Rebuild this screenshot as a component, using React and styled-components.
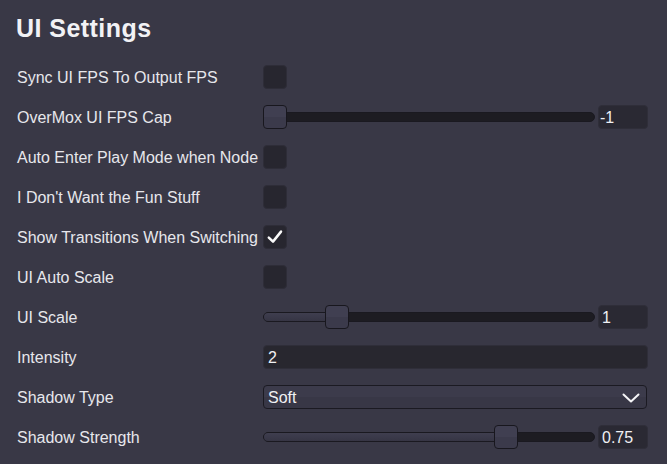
import React from 'react'
import styled, { createGlobalStyle } from 'styled-components'

const GlobalStyle = createGlobalStyle`
  html, body {
    margin: 0;
    padding: 0;
    background: #393846;
  }
  body {
    font-family: "Liberation Sans", Arial, sans-serif;
    color: #e7e7ec;
  }
`

const Page = styled.div`
  width: 667px;
  height: 464px;
  background: #393846;
  overflow: hidden;
`

const Title = styled.h1`
  margin: 0;
  height: 57px;
  padding: 13px 0 0 16px;
  box-sizing: border-box;
  font-size: 25px;
  line-height: 30px;
  font-weight: 700;
  letter-spacing: 0.45px;
  color: #f2f2f5;
`

const Grid = styled.div`
  display: grid;
  grid-template-columns: 246px 385px;
  grid-auto-rows: 40px;
  padding-left: 17px;
  align-items: center;
`

const Label = styled.div`
  font-size: 16px;
  padding-top: 2px;
  white-space: nowrap;
`

const Box = styled.div`
  width: 24px;
  height: 24px;
  box-sizing: border-box;
  border-radius: 4px;
  background: #27262f;
  border: 1px solid #2e2d38;
  display: flex;
  align-items: center;
  justify-content: center;
`

const SliderRow = styled.div`
  display: flex;
  align-items: center;
  gap: 3px;
`

const TrackArea = styled.div`
  position: relative;
  width: 332px;
  height: 24px;
  display: flex;
  align-items: center;
`

const Track = styled.div`
  width: 100%;
  height: 10px;
  box-sizing: border-box;
  border-radius: 5px;
  background: #1d1c22;
  border: 1px solid #1a1920;
  overflow: hidden;
  position: relative;
`

const Fill = styled.div`
  height: 100%;
  background: linear-gradient(#3f3e4f, #363544);
`

const Thumb = styled.div`
  position: absolute;
  top: 0;
  width: 24px;
  height: 24px;
  box-sizing: border-box;
  border-radius: 4px;
  border: 1px solid #18171e;
  background: linear-gradient(#403f51 0 50%, #3b3a4b 50% 100%);
`

const ValueBox = styled.div`
  width: 50px;
  height: 24px;
  box-sizing: border-box;
  border-radius: 4px;
  background: #2a2933;
  border: 1px solid #2f2e39;
  font-size: 16px;
  line-height: 23px;
  padding-left: ${p => p.$pad || 3}px;
  color: #f0f0f3;
`

const TextField = styled(ValueBox)`
  width: 385px;
  background: #28272f;
  padding-left: 4px;
`

const Select = styled.div`
  width: 384px;
  height: 24px;
  box-sizing: border-box;
  border-radius: 4px;
  border: 1px solid #1b1a22;
  background: linear-gradient(#3c3b4b 0 50%, #383746 50% 100%);
  display: flex;
  align-items: center;
  justify-content: space-between;
  padding: 1px 6px 0 4px;
  font-size: 16px;
  color: #f0f0f3;
`

function Check({ checked }) {
  return (
    <Box>
      {checked && (
        <svg width="20" height="20" viewBox="0 0 20 20">
          <path d="M3.8 10.6 L8 14.6 L16 4.6" fill="none" stroke="#fafafa" strokeWidth="2.5" strokeLinecap="round" strokeLinejoin="round" />
        </svg>
      )}
    </Box>
  )
}

function Slider({ frac, value, pad }) {
  const left = Math.round(frac * (332 - 24))
  return (
    <SliderRow>
      <TrackArea>
        <Track>
          <Fill style={{ width: left + 12 }} />
        </Track>
        <Thumb style={{ left }} />
      </TrackArea>
      <ValueBox $pad={pad}>{value}</ValueBox>
    </SliderRow>
  )
}

const rows = [
  { label: 'Sync UI FPS To Output FPS', kind: 'check' },
  { label: 'OverMox UI FPS Cap', kind: 'slider', frac: 0, value: '-1', pad: 1 },
  { label: 'Auto Enter Play Mode when Node', kind: 'check' },
  { label: "I Don't Want the Fun Stuff", kind: 'check' },
  { label: 'Show Transitions When Switching', kind: 'check', checked: true },
  { label: 'UI Auto Scale', kind: 'check' },
  { label: 'UI Scale', kind: 'slider', frac: 0.2, value: '1', pad: 3 },
  { label: 'Intensity', kind: 'text', value: '2' },
  { label: 'Shadow Type', kind: 'select', value: 'Soft' },
  { label: 'Shadow Strength', kind: 'slider', frac: 0.75, value: '0.75', pad: 3 },
]

function Control({ row }) {
  if (row.kind === 'check') return <Check checked={row.checked} />
  if (row.kind === 'slider') return <Slider frac={row.frac} value={row.value} pad={row.pad} />
  if (row.kind === 'text') return <TextField>{row.value}</TextField>
  return (
    <Select>
      <span>{row.value}</span>
      <svg width="18" height="10" viewBox="0 0 18 10">
        <path d="M1.5 1.5 L9 8.5 L16.5 1.5" fill="none" stroke="#f5f5f7" strokeWidth="2" strokeLinecap="round" strokeLinejoin="round" />
      </svg>
    </Select>
  )
}

export default function App() {
  return (
    <Page>
      <GlobalStyle />
      <Title>UI Settings</Title>
      <Grid>
        {rows.map(r => (
          <React.Fragment key={r.label}>
            <Label>{r.label}</Label>
            <Control row={r} />
          </React.Fragment>
        ))}
      </Grid>
    </Page>
  )
}
